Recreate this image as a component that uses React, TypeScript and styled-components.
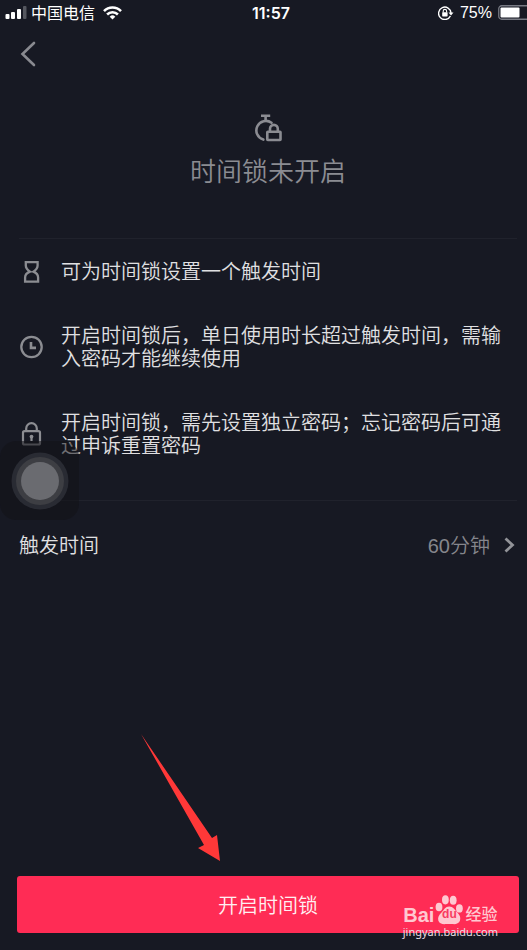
import React from "react";
import styled, { createGlobalStyle } from "styled-components";

const GlobalStyle = createGlobalStyle`
  * { box-sizing: border-box; }
  body {
    margin: 0;
    background: #171923;
    font-family: "Liberation Sans", "Noto Sans CJK SC", sans-serif;
  }
  svg { display: block; flex: none; }
`;

const Screen = styled.div`
  position: relative;
  display: flex;
  flex-direction: column;
  min-height: 100vh;
  overflow: hidden;
  background: #171923;
  color: #e0e0e2;
  font-weight: 350;
`;

const StatusBar = styled.header`
  display: grid;
  grid-template-columns: 1fr auto 1fr;
  align-items: center;
  height: 25px;
  padding-left: 5px;
  color: #fff;
  font-family: Inter, "Noto Sans CJK SC", sans-serif;
  font-size: 16px;
  line-height: 24px;
`;

const StatusGroup = styled.div`
  display: flex;
  align-items: center;
  gap: 4px;
  font-weight: 500;
  white-space: nowrap;
`;

const StatusGroupEnd = styled(StatusGroup)`
  justify-content: flex-end;
  gap: 6px;
  font-family: "Liberation Sans", sans-serif;
  font-weight: 400;
`;

const Carrier = styled.span`
  margin-right: 4px;
  font-weight: 400;
`;

const Clock = styled.time`
  margin-left: 10px;
  font-weight: 600;
`;

const NavBar = styled.nav`
  display: flex;
  align-items: center;
  height: 58px;
  padding-left: 20px;
`;

const IconButton = styled.button`
  padding: 0;
  border: 0;
  background: none;
  color: #898a90;
  cursor: pointer;
`;

const Hero = styled.section`
  display: flex;
  flex-direction: column;
  align-items: center;
  gap: 13px;
  padding: 31px 0 49px 9px;
  color: #8b8c92;
`;

const Title = styled.h1`
  margin: 0;
  font-size: 26px;
  font-weight: 350;
  line-height: 34px;
`;

const FeatureList = styled.ul`
  display: flex;
  flex-direction: column;
  gap: 39px;
  margin: 0 10px 0 19px;
  padding: 20px 8px 42px 0;
  border: solid #20222c;
  border-width: 1px 0;
  list-style: none;
`;

const Feature = styled.li`
  display: flex;
  align-items: center;
  gap: 17px;
  font-size: 20px;
  line-height: 23px;

  svg { color: #8c8d92; }
`;

const FeatureText = styled.span`
  padding-top: 2px;
`;

const SettingRow = styled.button`
  display: flex;
  align-items: center;
  height: 87px;
  padding: 0 12px 0 19px;
  border: 0;
  background: none;
  color: #e0e0e2;
  font: inherit;
  font-size: 20px;
  cursor: pointer;
`;

const SettingValue = styled.span`
  display: flex;
  align-items: center;
  gap: 14px;
  margin-left: auto;
  color: #85868c;
`;

const Footer = styled.footer`
  margin-top: auto;
  padding: 0 8px 17px 17px;
`;

const PrimaryButton = styled.button`
  display: block;
  width: 100%;
  height: 57px;
  padding: 0;
  border: 0;
  border-radius: 3px;
  background: #ff2c55;
  color: #fff0f2;
  font: inherit;
  font-size: 20px;
  cursor: pointer;
`;

const AssistiveTouch = styled.button`
  position: absolute;
  top: 441px;
  left: 0;
  display: grid;
  place-items: center;
  width: 79px;
  height: 79px;
  padding: 0;
  border: 0;
  border-radius: 16px;
  background: rgba(18, 18, 24, 0.55);
`;

const Pointer = styled.svg`
  position: absolute;
  left: 140px;
  bottom: 86px;
`;

const Watermark = styled.div`
  position: absolute;
  right: 29px;
  bottom: 11px;
  display: flex;
  flex-direction: column;
  align-items: center;
  color: #ffc8d1;
  pointer-events: none;
`;

const Brand = styled.div`
  display: flex;
  align-items: flex-end;
  font-size: 20px;
  font-weight: 700;
  line-height: 20px;
`;

const Paw = styled.span`
  display: grid;
  place-items: center;
  margin: 0 2px 0 1px;

  svg, span { grid-area: 1 / 1; }
  span {
    margin-top: 8px;
    color: #f83c61;
    font-size: 12px;
    line-height: 12px;
  }
`;

const BrandSuffix = styled.span`
  font-size: 16px;
  font-weight: 500;
`;

const SiteAddress = styled.span`
  color: #e9dfe3;
  font-family: "Noto Sans", sans-serif;
  font-size: 11px;
  font-weight: 400;
  line-height: 14px;
`;

const SignalIcon = () => (
  <svg width="22" height="13" viewBox="0 0 22 13" fill="#fff" aria-hidden>
    <rect x="0.5" y="8" width="4" height="5" rx="1" />
    <rect x="6" y="6" width="4" height="7" rx="1" />
    <rect x="12" y="3" width="4" height="10" rx="1" />
    <rect x="18" y="0" width="3.5" height="13" rx="1" fill="#55575f" />
  </svg>
);

const WifiIcon = () => (
  <svg width="19" height="14" viewBox="0 0 19 14" fill="none" stroke="#fff" strokeWidth="2.6" aria-hidden>
    <path d="M1 5.1a12 12 0 0 1 17 0M4.1 8.5a7.7 7.7 0 0 1 10.8 0" />
    <path d="M9.5 13.5 6.7 10.7a4 4 0 0 1 5.6 0Z" fill="#fff" stroke="none" />
  </svg>
);

const RotationLockIcon = () => (
  <svg width="16" height="14" viewBox="0 0 16 14" fill="none" stroke="#fff" strokeWidth="1.4" aria-hidden>
    <path d="M12.4 10A6.2 6.2 0 1 1 13 7" />
    <path d="M10.5 6.6h5L13 9.6Z" fill="#fff" stroke="none" />
    <rect x="4.2" y="6.2" width="5.4" height="4.2" rx="0.6" fill="#fff" stroke="none" />
    <path d="M5.2 6.5V5.1a1.7 1.7 0 0 1 3.4 0v1.4" strokeWidth="1.1" />
  </svg>
);

const BatteryIcon = () => (
  <svg width="29" height="15" viewBox="0 0 29 15" aria-hidden>
    <rect x="0.75" y="0.75" width="32" height="13.5" rx="3" fill="none" stroke="#777982" strokeWidth="1.3" />
    <rect x="2.5" y="2.5" width="19" height="10" rx="1" fill="#fff" />
  </svg>
);

const BackIcon = () => (
  <svg width="16" height="26" viewBox="0 0 16 26" fill="none" stroke="currentColor" strokeWidth="2.6" strokeLinecap="round" aria-hidden>
    <path d="M14 2 2.5 13 14 24" />
  </svg>
);

const TimerLockIcon = () => (
  <svg width="28" height="28" viewBox="0 0 28 28" fill="none" stroke="currentColor" strokeWidth="2.6" aria-hidden>
    <path d="M7 1.8H16.200M11.6 2V7" />
    <path d="M17.5 8.8A9.5 9.5 0 1 0 9.3 25.6" strokeLinecap="round" />
    <rect x="13.3" y="17.8" width="13.2" height="8.2" rx="0.5" />
    <path d="M16 17.500v-2.700a3.900 3.900 0 0 1 7.800 0v2.700" />
  </svg>
);

const HourglassIcon = () => (
  <svg width="25" height="24" viewBox="0 0 25 24" fill="none" stroke="currentColor" strokeWidth="2.3" aria-hidden>
    <path d="M6.8 2.2H18.6v3.3c0 3-1.700 4.500-4.200 6.100 2.900 1.200 4.700 3.200 4.700 5.800v4.300H6.1v-4.300c0-2.600 1.900-4.600 4.900-5.800-2.500-1.600-4.200-3.100-4.200-6.100Z" />
  </svg>
);

const ClockIcon = () => (
  <svg width="25" height="24" viewBox="0 0 25 24" fill="none" stroke="currentColor" strokeWidth="2.3" aria-hidden>
    <circle cx="12.5" cy="12" r="10.2" />
    <path d="M12 7v5.9h5" strokeWidth="2.6" />
  </svg>
);

const LockIcon = () => (
  <svg width="25" height="24" viewBox="0 0 25 24" fill="none" stroke="currentColor" strokeWidth="2.2" aria-hidden>
    <rect x="4" y="9.2" width="17" height="13.3" rx="1.5" />
    <path d="M7.200 9V6.500a5.300 5.300 0 0 1 10.600 0V9" />
    <circle cx="12.5" cy="14.6" r="1.9" fill="currentColor" stroke="none" />
    <path d="M12.5 15v4" />
  </svg>
);

const ForwardIcon = () => (
  <svg width="11" height="16" viewBox="0 0 11 16" fill="none" stroke="#929398" strokeWidth="2.8" aria-hidden>
    <path d="M1.5 1.5 8.5 8l-7 6.5" />
  </svg>
);

const PawIcon = () => (
  <svg width="28" height="30" viewBox="0 0 28 30" fill="currentColor" aria-hidden>
    <ellipse cx="4" cy="12" rx="3.4" ry="4.3" />
    <ellipse cx="10.4" cy="4.8" rx="3.4" ry="4.6" />
    <ellipse cx="18.2" cy="5.2" rx="3.4" ry="4.5" />
    <ellipse cx="24.4" cy="13.4" rx="3.4" ry="4.2" />
    <path d="M14.2 11.5c4 0 5.6 3.5 8.1 6.1 2.5 2.5 3.6 5 2.7 7.9-1 3.2-4.5 4-7.4 3.6-2-.3-4.4-.3-6.4 0-3.5.6-7-.5-7.9-3.6-.8-3 .8-5.500 3.200-7.900 2.500-2.600 3.700-6.100 7.700-6.100Z" />
  </svg>
);

const features = [
  { Icon: HourglassIcon, text: "可为时间锁设置一个触发时间" },
  { Icon: ClockIcon, text: "开启时间锁后，单日使用时长超过触发时间，需输入密码才能继续使用" },
  { Icon: LockIcon, text: "开启时间锁，需先设置独立密码；忘记密码后可通过申诉重置密码" },
];

export default function App() {
  return (
    <Screen>
      <GlobalStyle />
      <StatusBar>
        <StatusGroup>
          <SignalIcon />
          <Carrier>中国电信</Carrier>
          <WifiIcon />
        </StatusGroup>
        <Clock>11:57</Clock>
        <StatusGroupEnd>
          <RotationLockIcon />
          <span>75%</span>
          <BatteryIcon />
        </StatusGroupEnd>
      </StatusBar>

      <NavBar>
        <IconButton type="button" aria-label="返回">
          <BackIcon />
        </IconButton>
      </NavBar>

      <main>
        <Hero>
          <TimerLockIcon />
          <Title>时间锁未开启</Title>
        </Hero>
        <FeatureList>
          {features.map(({ Icon, text }) => (
            <Feature key={text}>
              <Icon />
              <FeatureText>{text}</FeatureText>
            </Feature>
          ))}
        </FeatureList>
      </main>

      <SettingRow type="button">
        <span>触发时间</span>
        <SettingValue>
          60分钟
          <ForwardIcon />
        </SettingValue>
      </SettingRow>

      <Footer>
        <PrimaryButton type="button">开启时间锁</PrimaryButton>
      </Footer>

      <AssistiveTouch type="button" aria-label="辅助触控">
        <svg width="58" height="58" viewBox="0 0 58 58" aria-hidden>
          <circle cx="29" cy="29" r="28.5" fill="#292b33" />
          <circle cx="29" cy="29" r="24" fill="#3d3e43" />
          <circle cx="29" cy="29" r="19" fill="#6a6b70" />
        </svg>
      </AssistiveTouch>

      <Pointer width="82" height="130" viewBox="0 0 82 130" aria-hidden>
        <path d="M1 0 72 104 77 101 80 127 58 114 64 111Z" fill="#ff3838" />
      </Pointer>

      <Watermark>
        <Brand>
          <span>Bai</span>
          <Paw>
            <PawIcon />
            <span>du</span>
          </Paw>
          <BrandSuffix>经验</BrandSuffix>
        </Brand>
        <SiteAddress>jingyan.baidu.com</SiteAddress>
      </Watermark>
    </Screen>
  );
}
